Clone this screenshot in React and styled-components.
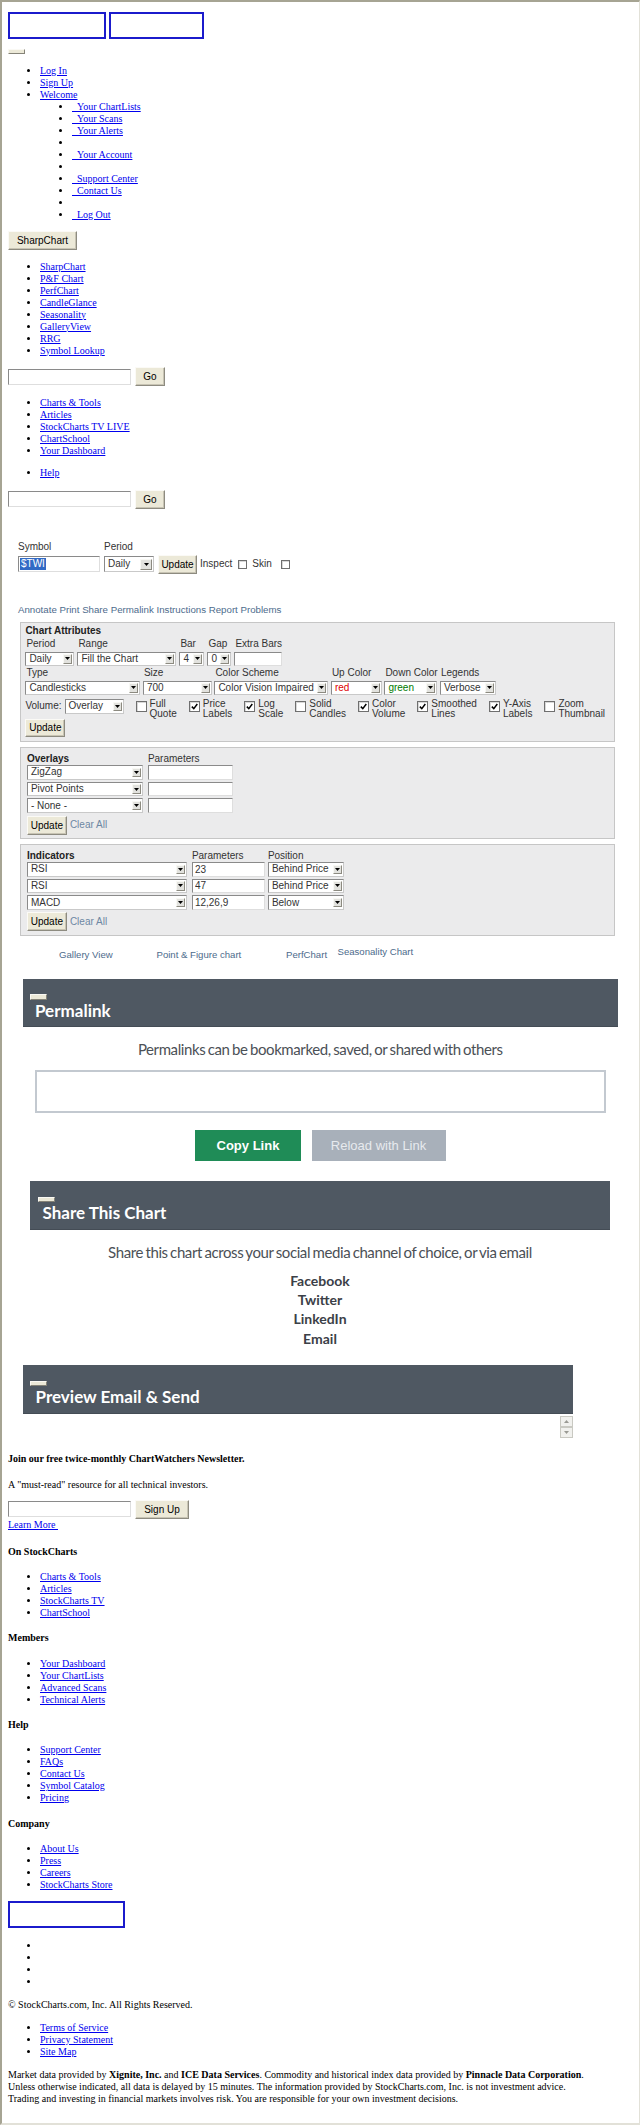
import React from 'react';
import styled, { createGlobalStyle } from 'styled-components';

const SANS = `"Liberation Sans", Arial, sans-serif`;
const LATO = `Lato, "Open Sans", sans-serif`;

const GlobalStyle = createGlobalStyle`
  html, body { margin: 0; padding: 0; background: #fff; }
  body {
    font-family: "Liberation Serif", "Times New Roman", serif;
    font-size: 10px;
    line-height: 12px;
    color: #000;
  }
  a { color: #0000ee; }
`;

const Page = styled.div`
  box-sizing: border-box;
  min-height: 2125px;
  border-top: 2px solid #a6a493;
  border-left: 2px solid #a6a493;
  border-right: 1px solid #e2e1d8;
  border-bottom: 2px solid #e2e1d8;
  padding: 10px 6px 0;
`;

const LogoRow = styled.div`
  display: flex;
  gap: 3px;
`;

const LogoBox = styled.a`
  display: block;
  box-sizing: border-box;
  width: ${(p) => p.$w}px;
  height: ${(p) => p.$h}px;
  border: 2px solid #1b1bcc;
`;

const TinyButton = styled.button`
  display: block;
  box-sizing: border-box;
  width: 17px;
  height: ${(p) => p.$h || 5}px;
  margin: ${(p) => p.$m || 0};
  padding: 0;
  background: #ece9d8;
  border: 1px solid;
  border-color: #faf9f4 #858378 #858378 #faf9f4;
  border-radius: 0;
`;

const LinkList = styled.ul`
  margin: ${(p) => p.$m || '10.5px 0'};
  padding-left: 32px;
  list-style: disc;
  li {
    line-height: 12px;
  }
`;

const SubList = styled.ul`
  margin: 0;
  padding-left: 32px;
  list-style: disc;
`;

const XpButton = styled.button`
  box-sizing: border-box;
  height: ${(p) => p.$h || 19}px;
  width: ${(p) => (p.$w ? `${p.$w}px` : 'auto')};
  margin: 0;
  padding: 0;
  font: 10px ${SANS};
  color: #000;
  background: #ece9d8;
  border: 1px solid;
  border-color: #fbfaf6 #8d8b80 #8d8b80 #fbfaf6;
  box-shadow: inset -1px -1px 0 #c8c4b4;
  border-radius: 0;
  flex: none;
`;

const SearchRow = styled.div`
  display: flex;
  align-items: center;
  gap: 4px;
  margin: ${(p) => p.$m || 0};
`;

const TextBox = styled.input`
  box-sizing: border-box;
  width: ${(p) => p.$w}px;
  height: ${(p) => p.$h || 16}px;
  margin: 0;
  padding: 0 2px;
  font: 10px ${SANS};
  color: #333;
  background: #fff;
  border: 1px solid;
  border-color: #8a8a8a #dedede #dedede #8a8a8a;
  border-radius: 0;
  outline: none;
`;

/* symbol form */
const SymbolForm = styled.div`
  display: grid;
  grid-template-columns: 82px 50px auto;
  column-gap: 4px;
  row-gap: 2px;
  align-items: center;
  margin: 32px 0 0 10px;
  font: 10px/12px ${SANS};
  color: #333;
`;

const FakeInput = styled.span`
  display: inline-flex;
  align-items: center;
  box-sizing: border-box;
  width: 82px;
  height: 16px;
  padding-left: 1px;
  background: #fff;
  border: 1px solid;
  border-color: #8a8a8a #dedede #dedede #8a8a8a;
`;

const Selected = styled.span`
  background: #316ac5;
  color: #fff;
  line-height: 12px;
  padding: 0 1px;
`;

const ToolRow = styled.div`
  display: flex;
  align-items: center;
`;

const ToolText = styled.span`
  margin-left: ${(p) => p.$ml || 0}px;
`;

const CheckBox = styled.span`
  display: inline-flex;
  align-items: center;
  justify-content: center;
  flex: none;
  box-sizing: border-box;
  width: ${(p) => p.$s || 10}px;
  height: ${(p) => p.$s || 10}px;
  margin: ${(p) => p.$m || 0};
  background: #fff;
  border: 1px solid #6f6f6f;
  box-shadow: inset 1px 1px 0 #d8d8d8;
`;

const ChartLinks = styled.div`
  margin: 30px 0 0 10px;
  font: 9.7px/12px ${SANS};
  a {
    color: #4d6b8c;
    text-decoration: none;
  }
`;

/* select */
const SelectBox = styled.span`
  display: inline-flex;
  align-items: center;
  justify-content: space-between;
  box-sizing: border-box;
  width: ${(p) => p.$w}px;
  height: ${(p) => p.$h}px;
  padding-left: 3px;
  background: #fff;
  border: 1px solid;
  border-color: #8a8a8a #c9c9c9 #c9c9c9 #8a8a8a;
  font: 10px/1 ${SANS};
  color: ${(p) => p.$color || '#333'};
  white-space: nowrap;
  overflow: hidden;
  flex: none;
`;

const SelectArrow = styled.span`
  display: flex;
  align-items: center;
  justify-content: center;
  flex: none;
  box-sizing: border-box;
  width: ${(p) => p.$aw}px;
  height: calc(100% - 3px);
  margin-right: 1px;
  background: #e2e2de;
  border: 1px solid;
  border-color: #f8f8f4 #8c8a80 #8c8a80 #f8f8f4;
`;

const Select = ({ w, h = 14.5, aw = 9, color, children }) => (
  <SelectBox $w={w} $h={h} $color={color}>
    <span>{children}</span>
    <SelectArrow $aw={aw}>
      <svg width="5" height="3" viewBox="0 0 5 3">
        <path d="M0 0h5L2.5 3z" fill="#000" />
      </svg>
    </SelectArrow>
  </SelectBox>
);

const Check = ({ checked, s, m }) => (
  <CheckBox $s={s} $m={m}>
    {checked && (
      <svg width="7" height="7" viewBox="0 0 7 7">
        <path d="M0.8 3.6L2.8 5.6L6.3 1" fill="none" stroke="#000" strokeWidth="1.5" />
      </svg>
    )}
  </CheckBox>
);

/* panels */
const Panel = styled.div`
  box-sizing: border-box;
  width: 594.6px;
  margin: ${(p) => p.$mt}px 0 0 12.4px;
  padding: ${(p) => p.$pt}px 4px ${(p) => p.$pb}px ${(p) => p.$pl}px;
  background: #ebebec;
  border: 1px solid #c6c6c6;
  font: 10px/12px ${SANS};
  color: #333;
`;

const PanelTitle = styled.div`
  height: 12px;
  margin-bottom: 1px;
  font-weight: bold;
  color: #222;
`;

const FieldRow = styled.div`
  display: flex;
  gap: ${(p) => p.$gap}px;
  margin-top: ${(p) => p.$mt || 0}px;
`;

const Field = styled.div`
  display: flex;
  flex-direction: column;
  width: ${(p) => p.$w}px;
`;

const FieldLabel = styled.span`
  height: 12px;
  padding-left: 1px;
  margin-bottom: 1.5px;
  white-space: nowrap;
`;

const VolumeRow = styled.div`
  display: flex;
  align-items: flex-start;
  margin-top: 4px;
`;

const VolumeLabel = styled.span`
  line-height: 14.5px;
  margin-right: 3px;
`;

const CheckGroup = styled.div`
  display: flex;
  gap: 12px;
  margin-left: 12px;
`;

const CheckItem = styled.label`
  display: flex;
  align-items: flex-start;
  gap: 3px;
`;

const CheckText = styled.span`
  line-height: 9.7px;
  white-space: nowrap;
`;

const ParamGrid = styled.div`
  display: grid;
  grid-template-columns: ${(p) => p.$cols};
  row-gap: ${(p) => p.$rg || 0}px;
  align-items: start;
`;

const HeadCell = styled.span`
  height: 12px;
  white-space: nowrap;
  font-weight: ${(p) => (p.$bold ? 'bold' : 'normal')};
  color: ${(p) => (p.$bold ? '#222' : '#333')};
`;

const ActionRow = styled.div`
  display: flex;
  align-items: center;
  margin-top: ${(p) => p.$mt}px;
`;

const ClearAll = styled.a`
  margin-left: 3px;
  color: #6d87a3 !important;
  text-decoration: none;
`;

const ToolLinks = styled.div`
  display: grid;
  grid-template-columns: 97.5px 129.5px 51.5px auto;
  align-items: end;
  margin-top: 10px;
  padding-left: 51px;
  font: 9.6px/12px ${SANS};
  a {
    color: #4d6b8c;
    text-decoration: none;
    white-space: nowrap;
  }
`;

const RaisedLink = styled.a`
  margin-bottom: 3px;
`;

/* modal-like sections */
const Section = styled.section`
  width: ${(p) => p.$w}px;
  margin: ${(p) => p.$mt}px 0 0 ${(p) => p.$ml}px;
`;

const SectionHeader = styled.div`
  box-sizing: border-box;
  height: ${(p) => p.$h}px;
  padding: ${(p) => p.$pt}px 0 0 ${(p) => p.$pl}px;
  background: #4f5862;
  border-bottom: 1px solid #444c55;
`;

const SectionTitle = styled.h3`
  margin: ${(p) => p.$mt}px 0 0 ${(p) => p.$ml}px;
  font: bold 17px/20px ${LATO};
  color: #fff;
`;

const Lead = styled.p`
  margin: ${(p) => p.$mt}px 0 0;
  font: 15px/18px ${LATO};
  letter-spacing: -0.4px;
  word-spacing: -1px;
  color: #4b5056;
  text-align: center;
`;

const PermalinkBox = styled.div`
  box-sizing: border-box;
  width: 571.3px;
  height: 43.3px;
  margin: 11.7px auto 0;
  background: #fff;
  border: 2px solid #c3c9d0;
`;

const ButtonRow = styled.div`
  display: flex;
  justify-content: center;
  gap: 10.6px;
  margin-top: 17.4px;
`;

const FlatButton = styled.button`
  box-sizing: border-box;
  width: ${(p) => p.$w}px;
  height: 31px;
  padding: 0;
  border: none;
  border-radius: 0;
  font: ${(p) => (p.$primary ? 'bold' : 'normal')} 13px ${SANS};
  color: ${(p) => (p.$primary ? '#fff' : '#e7eaee')};
  background: ${(p) => (p.$primary ? '#1f8c57' : '#a8b0ba')};
`;

const SocialList = styled.div`
  margin-top: 9.7px;
  display: flex;
  flex-direction: column;
  align-items: center;
  a {
    font: bold 14px/19.4px ${LATO};
    color: #3b4047;
    text-decoration: none;
  }
`;

const ScrollStub = styled.div`
  display: flex;
  flex-direction: column;
  width: 13px;
  margin: 1.7px 0 0 auto;
`;

const ScrollArrow = styled.span`
  display: flex;
  align-items: center;
  justify-content: center;
  box-sizing: border-box;
  height: 11.3px;
  background: #f1f1ee;
  border: 1px solid #c9c9c2;
`;

/* footer */
const BoldLine = styled.p`
  margin: ${(p) => p.$mt}px 0 0;
  font-weight: bold;
`;

const PlainLine = styled.p`
  margin: ${(p) => p.$m};
`;

const FooterHeading = styled.h4`
  margin: 13.3px 0;
  font-size: 10px;
  line-height: 12px;
`;

const FooterLogo = styled.a`
  display: block;
  box-sizing: border-box;
  width: 116.6px;
  height: 26.4px;
  border: 2px solid #1b1bcc;
`;

const Disclaimer = styled.p`
  margin: 11px 0;
  line-height: 12.3px;
`;

const userMenu = [
  'Your ChartLists',
  'Your Scans',
  'Your Alerts',
  null,
  'Your Account',
  null,
  'Support Center',
  'Contact Us',
  null,
  'Log Out',
];

const chartTools = ['SharpChart', 'P&F Chart', 'PerfChart', 'CandleGlance', 'Seasonality', 'GalleryView', 'RRG', 'Symbol Lookup'];
const mainNav = ['Charts & Tools', 'Articles', 'StockCharts TV LIVE', 'ChartSchool', 'Your Dashboard'];

const checks = [
  ['Full', 'Quote', false],
  ['Price', 'Labels', true],
  ['Log', 'Scale', true],
  ['Solid', 'Candles', false],
  ['Color', 'Volume', true],
  ['Smoothed', 'Lines', true],
  ['Y-Axis', 'Labels', true],
  ['Zoom', 'Thumbnail', false],
];

const footerGroups = [
  ['On StockCharts', ['Charts & Tools', 'Articles', 'StockCharts TV', 'ChartSchool']],
  ['Members', ['Your Dashboard', 'Your ChartLists', 'Advanced Scans', 'Technical Alerts']],
  ['Help', ['Support Center', 'FAQs', 'Contact Us', 'Symbol Catalog', 'Pricing']],
  ['Company', ['About Us', 'Press', 'Careers', 'StockCharts Store']],
];

const overlays = ['ZigZag', 'Pivot Points', '- None -'];
const indicators = [
  ['RSI', '23', 'Behind Price'],
  ['RSI', '47', 'Behind Price'],
  ['MACD', '12,26,9', 'Below'],
];

const App = () => {
  return (
    <Page>
      <GlobalStyle />

      <LogoRow>
        <LogoBox href="#" $w={98} $h={27} />
        <LogoBox href="#" $w={95} $h={27} />
      </LogoRow>
      <TinyButton $m="10px 0 0" />

      <LinkList>
        <li><a href="#">Log In</a></li>
        <li><a href="#">Sign Up</a></li>
        <li>
          <a href="#">Welcome</a>
          <SubList>
            {userMenu.map((item, i) => (
              <li key={i}>{item ? <a href="#">{'\u00a0\u00a0' + item}</a> : '\u00a0'}</li>
            ))}
          </SubList>
        </li>
      </LinkList>

      <XpButton $w={69}>SharpChart</XpButton>

      <LinkList>
        {chartTools.map((t) => (
          <li key={t}><a href="#">{t}</a></li>
        ))}
      </LinkList>
      <SearchRow>
        <TextBox $w={123} />
        <XpButton $w={30}>Go</XpButton>
      </SearchRow>

      <LinkList>
        {mainNav.map((t) => (
          <li key={t}><a href="#">{t}</a></li>
        ))}
      </LinkList>
      <LinkList>
        <li><a href="#">Help</a></li>
      </LinkList>
      <SearchRow>
        <TextBox $w={123} />
        <XpButton $w={30}>Go</XpButton>
      </SearchRow>

      <SymbolForm>
        <span>Symbol</span>
        <span>Period</span>
        <span />
        <FakeInput><Selected>$TWI</Selected></FakeInput>
        <Select w={50} h={16} aw={12}>Daily</Select>
        <ToolRow>
          <XpButton $w={39} $h={19.3}>Update</XpButton>
          <ToolText $ml={3}>Inspect</ToolText>
          <Check s={9} m="0 0 0 6px" />
          <ToolText $ml={5}>Skin</ToolText>
          <Check s={9} m="0 0 0 9px" />
        </ToolRow>
      </SymbolForm>

      <ChartLinks>
        <a href="#">Annotate</a> <a href="#">Print</a> <a href="#">Share</a> <a href="#">Permalink</a>{' '}
        <a href="#">Instructions</a> <a href="#">Report Problems</a>
      </ChartLinks>

      <Panel $mt={6.3} $pt={2} $pb={4.4} $pl={4}>
        <PanelTitle>Chart Attributes</PanelTitle>
        <FieldRow $gap={3}>
          <Field $w={49}><FieldLabel>Period</FieldLabel><Select w={49}>Daily</Select></Field>
          <Field $w={99}><FieldLabel>Range</FieldLabel><Select w={99}>Fill the Chart</Select></Field>
          <Field $w={25}><FieldLabel>Bar</FieldLabel><Select w={25}>4</Select></Field>
          <Field $w={24}><FieldLabel>Gap</FieldLabel><Select w={24}>0</Select></Field>
          <Field $w={48}><FieldLabel>Extra Bars</FieldLabel><TextBox $w={48} $h={14.5} /></Field>
        </FieldRow>
        <FieldRow $gap={2.5} $mt={1}>
          <Field $w={115}><FieldLabel>Type</FieldLabel><Select w={115}>Candlesticks</Select></Field>
          <Field $w={69}><FieldLabel>Size</FieldLabel><Select w={69}>700</Select></Field>
          <Field $w={114}><FieldLabel>Color Scheme</FieldLabel><Select w={114}>Color Vision Impaired</Select></Field>
          <Field $w={51}><FieldLabel>Up Color</FieldLabel><Select w={51} color="#e00000">red</Select></Field>
          <Field $w={53}><FieldLabel>Down Color</FieldLabel><Select w={53} color="#007a00">green</Select></Field>
          <Field $w={56}><FieldLabel>Legends</FieldLabel><Select w={56}>Verbose</Select></Field>
        </FieldRow>
        <VolumeRow>
          <VolumeLabel>Volume:</VolumeLabel>
          <Select w={59}>Overlay</Select>
          <CheckGroup>
            {checks.map(([a, b, on]) => (
              <CheckItem key={a}>
                <Check checked={on} s={11} m="2px 0 0" />
                <CheckText>{a}<br />{b}</CheckText>
              </CheckItem>
            ))}
          </CheckGroup>
        </VolumeRow>
        <ActionRow $mt={0.3}>
          <XpButton $w={40} $h={18.3}>Update</XpButton>
        </ActionRow>
      </Panel>

      <Panel $mt={4.6} $pt={5} $pb={3.4} $pl={5.5}>
        <ParamGrid $cols="121px 85px">
          <HeadCell $bold>Overlays</HeadCell>
          <HeadCell>Parameters</HeadCell>
        </ParamGrid>
        <ParamGrid $cols="121px 85px" $rg={2.2}>
          {overlays.map((o) => (
            <React.Fragment key={o}>
              <Select w={116}>{o}</Select>
              <TextBox $w={85} $h={14.5} />
            </React.Fragment>
          ))}
        </ParamGrid>
        <ActionRow $mt={2.7}>
          <XpButton $w={40}>Update</XpButton>
          <ClearAll href="#">Clear All</ClearAll>
        </ActionRow>
      </Panel>

      <Panel $mt={5} $pt={5} $pb={4.3} $pl={5.5}>
        <ParamGrid $cols="165px 76px 76px">
          <HeadCell $bold>Indicators</HeadCell>
          <HeadCell>Parameters</HeadCell>
          <HeadCell>Position</HeadCell>
        </ParamGrid>
        <ParamGrid $cols="165px 76px 76px" $rg={2}>
          {indicators.map(([name, params, pos], i) => (
            <React.Fragment key={i}>
              <Select w={160} h={14.6}>{name}</Select>
              <TextBox $w={73} $h={14.6} defaultValue={params} />
              <Select w={76} h={14.6}>{pos}</Select>
            </React.Fragment>
          ))}
        </ParamGrid>
        <ActionRow $mt={2.3}>
          <XpButton $w={40}>Update</XpButton>
          <ClearAll href="#">Clear All</ClearAll>
        </ActionRow>
      </Panel>

      <ToolLinks>
        <a href="#">Gallery View</a>
        <a href="#">Point &amp; Figure chart</a>
        <a href="#">PerfChart</a>
        <RaisedLink href="#">Seasonality Chart</RaisedLink>
      </ToolLinks>

      <Section $w={595.5} $ml={14.5} $mt={17.6}>
        <SectionHeader $h={48} $pt={14.7} $pl={7.5}>
          <TinyButton $h={6} />
          <SectionTitle $mt={1.7} $ml={5}>Permalink</SectionTitle>
        </SectionHeader>
        <Lead $mt={13}>Permalinks can be bookmarked, saved, or shared with others</Lead>
        <PermalinkBox />
        <ButtonRow>
          <FlatButton $primary $w={106}>Copy Link</FlatButton>
          <FlatButton $w={134}>Reload with Link</FlatButton>
        </ButtonRow>
      </Section>

      <Section $w={580} $ml={22} $mt={20}>
        <SectionHeader $h={49} $pt={15.3} $pl={8}>
          <TinyButton $h={5.7} />
          <SectionTitle $mt={0.3} $ml={4.5}>Share This Chart</SectionTitle>
        </SectionHeader>
        <Lead $mt={12.6}>Share this chart across your social media channel of choice, or via email</Lead>
        <SocialList>
          <a href="#">Facebook</a>
          <a href="#">Twitter</a>
          <a href="#">LinkedIn</a>
          <a href="#">Email</a>
        </SocialList>
      </Section>

      <Section $w={550.5} $ml={14.5} $mt={17}>
        <SectionHeader $h={48.6} $pt={15.3} $pl={7.5}>
          <TinyButton $h={5} />
          <SectionTitle $mt={1.7} $ml={5.5}>Preview Email &amp; Send</SectionTitle>
        </SectionHeader>
        <ScrollStub>
          <ScrollArrow>
            <svg width="5" height="3" viewBox="0 0 5 3"><path d="M0 3h5L2.5 0z" fill="#9a9a94" /></svg>
          </ScrollArrow>
          <ScrollArrow>
            <svg width="5" height="3" viewBox="0 0 5 3"><path d="M0 0h5L2.5 3z" fill="#9a9a94" /></svg>
          </ScrollArrow>
        </ScrollStub>
      </Section>

      <BoldLine $mt={15}>Join our free twice-monthly ChartWatchers Newsletter.</BoldLine>
      <PlainLine $m="13.7px 0 0">A &quot;must-read&quot; resource for all technical investors.</PlainLine>
      <SearchRow $m="9px 0 0">
        <TextBox $w={123} />
        <XpButton $w={54} $h={19.3}>Sign Up</XpButton>
      </SearchRow>
      <a href="#">Learn More&nbsp;</a>

      {footerGroups.map(([title, links], gi) => (
        <React.Fragment key={title}>
          <FooterHeading style={gi === 0 ? { marginTop: '14.6px' } : undefined}>{title}</FooterHeading>
          <LinkList>
            {links.map((l) => (
              <li key={l}><a href="#">{l}</a></li>
            ))}
          </LinkList>
        </React.Fragment>
      ))}

      <FooterLogo href="#" />
      <LinkList $m="12px 0 11px">
        <li>&nbsp;</li>
        <li>&nbsp;</li>
        <li>&nbsp;</li>
        <li>&nbsp;</li>
      </LinkList>

      <PlainLine $m="11px 0">© StockCharts.com, Inc. All Rights Reserved.</PlainLine>
      <LinkList $m="11px 0">
        <li><a href="#">Terms of Service</a></li>
        <li><a href="#">Privacy Statement</a></li>
        <li><a href="#">Site Map</a></li>
      </LinkList>

      <Disclaimer>
        Market data provided by <b>Xignite, Inc.</b> and <b>ICE Data Services</b>. Commodity and historical index data
        provided by <b>Pinnacle Data Corporation</b>.<br />
        Unless otherwise indicated, all data is delayed by 15 minutes. The information provided by StockCharts.com, Inc. is
        not investment advice.<br />
        Trading and investing in financial markets involves risk. You are responsible for your own investment decisions.
      </Disclaimer>
    </Page>
  );
};

export default App;
